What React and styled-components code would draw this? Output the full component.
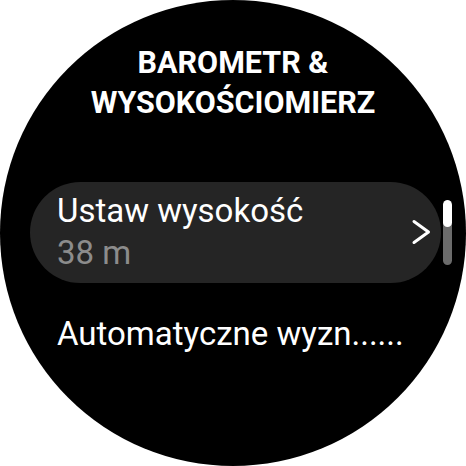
import React from 'react'
import styled, { createGlobalStyle } from 'styled-components';

const GlobalStyle = createGlobalStyle`
    html, body {
        margin: 0;
        padding: 0;
        background: #ffffff;
    }
`;

const Screen = styled.div`
    width: 466px;
    height: 466px;
    border-radius: 50%;
    background: #000000;
    overflow: hidden;
    position: relative;
    display: flex;
    flex-direction: column;
    font-family: Roboto, "Noto Sans", sans-serif;
    color: #ffffff;
`;

const Title = styled.h1`
    margin: 43px 0 0 0;
    font-size: 30.5px;
    font-weight: 700;
    line-height: 40px;
    text-align: center;
`;

const List = styled.div`
    margin-top: 59px;
    display: flex;
    flex-direction: column;
    gap: 30px;
`;

const Row = styled.div`
    margin-left: 30px;
    width: 411px;
    box-sizing: border-box;
    padding: ${({ $card }) => ($card ? '8px 10px 9px 27px' : '0 10px 0 27px')};
    border-radius: 51px;
    background: ${({ $card }) => ($card ? '#252525' : 'transparent')};
    display: flex;
    align-items: center;
    justify-content: space-between;
`;

const Info = styled.div`
    display: flex;
    flex-direction: column;
`;

const Label = styled.div`
    font-size: 33px;
    line-height: 42px;
    white-space: nowrap;
`;

const Value = styled.div`
    font-size: 33px;
    line-height: 42px;
    color: #8c8c8c;
`;

const Scrollbar = styled.div`
    position: absolute;
    left: 443px;
    top: 200px;
    width: 9px;
    height: 65px;
    border-radius: 5px;
    background: #6b6b6b;
    overflow: hidden;

    &::before {
        content: "";
        display: block;
        height: 27px;
        border-radius: 5px;
        background: #ffffff;
    }
`;

const Chevron = () => (
    <svg width="20" height="26" viewBox="0 0 20 26">
        <path d="M3 2.5 L17.5 13 L3 23.5" fill="none" stroke="#fff" strokeWidth="3" strokeLinecap="round" strokeLinejoin="round" />
    </svg>
);

const App = () => {
    return (
        <>
            <GlobalStyle />
            <Screen>
                <Title>
                    BAROMETR &amp;<br />WYSOKOŚCIOMIERZ
                </Title>
                <List>
                    <Row $card>
                        <Info>
                            <Label>Ustaw wysokość</Label>
                            <Value>38 m</Value>
                        </Info>
                        <Chevron />
                    </Row>
                    <Row>
                        <Label>Automatyczne wyzn......</Label>
                    </Row>
                </List>
                <Scrollbar />
            </Screen>
        </>
    )
}

export default App
